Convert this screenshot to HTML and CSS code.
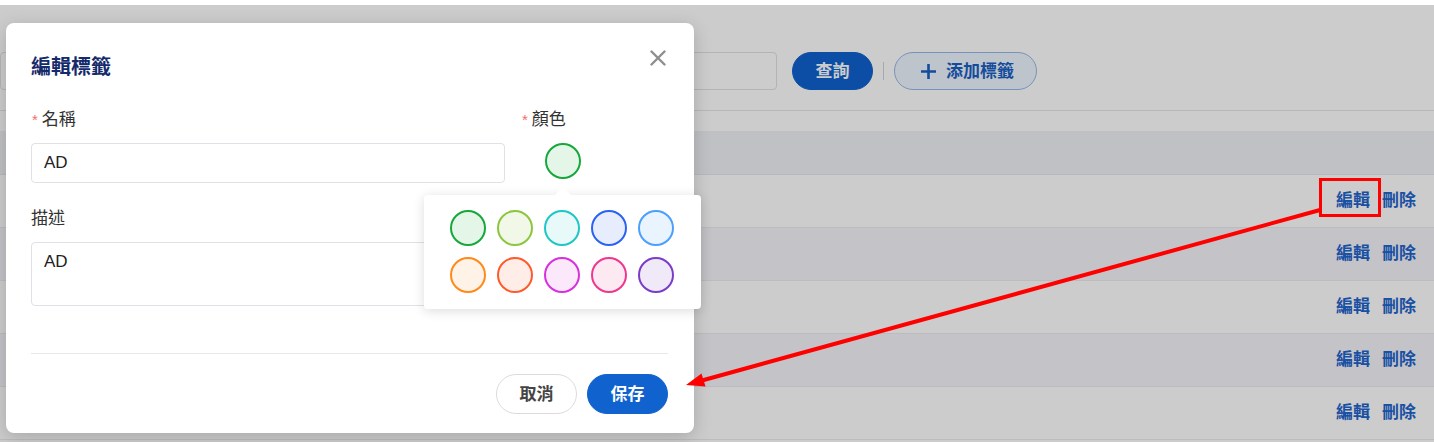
FILE: index.html
```html
<!DOCTYPE html>
<html lang="zh-Hant">
<head>
<meta charset="utf-8">
<title>編輯標籤</title>
<link rel="stylesheet" href="styles.css">
</head>
<body>
<div class="page">
  <div class="filters">
    <div class="toolbar">
      <div class="input input-a"></div>
      <div class="input input-b"></div>
      <button class="btn btn-primary btn-query">查詢</button>
      <span class="vsep"></span>
      <button class="btn btn-outline">
        <svg class="plus" width="17" height="17" viewBox="0 0 17 17"><path d="M8.5 1v15M1 8.5h15" stroke="currentColor" stroke-width="2.6" fill="none"/></svg>
        添加標籤
      </button>
    </div>
  </div>
  <div class="table">
    <div class="thead"></div>
    <div class="row"><div class="actions"><a class="link">編輯</a><a class="link">刪除</a></div></div>
    <div class="row alt"><div class="actions"><a class="link">編輯</a><a class="link">刪除</a></div></div>
    <div class="row"><div class="actions"><a class="link">編輯</a><a class="link">刪除</a></div></div>
    <div class="row alt"><div class="actions"><a class="link">編輯</a><a class="link">刪除</a></div></div>
    <div class="row"><div class="actions"><a class="link">編輯</a><a class="link">刪除</a></div></div>
  </div>
</div>

<div class="mask"></div>

<div class="modal">
  <div class="modal-header">
    <h2 class="modal-title">編輯標籤</h2>
    <button class="close" aria-label="close">
      <svg width="16" height="16" viewBox="0 0 16 16"><path d="M1.5 1.5l13 13M14.5 1.5l-13 13" stroke="currentColor" stroke-width="2.4" fill="none" stroke-linecap="round"/></svg>
    </button>
  </div>
  <div class="modal-body">
    <div class="form-grid">
      <div class="field">
        <label class="label"><span class="req">*</span>名稱</label>
        <div class="text-input">AD</div>
      </div>
      <div class="field">
        <label class="label"><span class="req">*</span>顏色</label>
        <div class="picker">
          <span class="swatch c-green"></span>
          <div class="popover">
            <span class="swatch c-green"></span>
            <span class="swatch c-lime"></span>
            <span class="swatch c-cyan"></span>
            <span class="swatch c-blue"></span>
            <span class="swatch c-sky"></span>
            <span class="swatch c-orange"></span>
            <span class="swatch c-red"></span>
            <span class="swatch c-magenta"></span>
            <span class="swatch c-pink"></span>
            <span class="swatch c-purple"></span>
          </div>
        </div>
      </div>
      <div class="field field-desc">
        <label class="label">描述</label>
        <div class="textarea">AD</div>
      </div>
    </div>
  </div>
  <div class="modal-footer">
    <button class="btn btn-default">取消</button>
    <button class="btn btn-primary btn-save">保存</button>
  </div>
</div>

<svg class="annot" width="1434" height="442" viewBox="0 0 1434 442">
  <rect x="1320.5" y="179.5" width="59" height="36" fill="none" stroke="#ff0000" stroke-width="3"/>
  <line x1="1320" y1="210" x2="702" y2="380.5" stroke="#ff0000" stroke-width="4"/>
  <polygon points="686,385 705.5,386.5 701.5,373.5" fill="#ff0000"/>
</svg>
</body>
</html>
```

FILE: styles.css
```css
* { box-sizing: border-box; }
html, body { margin: 0; height: 442px; overflow: hidden; }
body {
  position: relative;
  background: #fff;
  color: #333;
  font-family: "Liberation Sans", "Noto Sans CJK TC", sans-serif;
  font-size: 16px;
}

/* underlying page */
.page { padding-top: 52px; }
.filters { padding-bottom: 20px; border-bottom: 1px solid #e6e6ea; }
.toolbar { display: flex; align-items: center; height: 38px; }
.input { height: 38px; border: 1px solid #dfe1e7; border-radius: 4px; background: #fff; }
.input-a { width: 441px; margin-right: 16px; }
.input-b { width: 320px; margin-right: 15px; }
.btn {
  display: inline-flex; align-items: center; justify-content: center;
  height: 38px; border-radius: 19px; border: 1px solid transparent;
  font-family: inherit; font-size: 17px; font-weight: 700; padding: 0 22px;
  cursor: pointer; line-height: 1;
}
.btn-primary { background: #1062cf; color: #fff; border-color: #1062cf; }
.btn-query { width: 81px; padding: 0; }
.vsep { width: 1px; height: 18px; background: #d0d4dc; margin: 0 10px; }
.btn-outline {
  background: #eef5ff; border-color: #97b8e8; color: #1a5fc4;
  padding: 0 0 0 25px; gap: 9px; width: 143px; justify-content: flex-start;
}
.plus { display: block; flex: none; }

.table { margin-top: 20px; }
.thead { height: 44px; background: #f1f2f6; border-bottom: 1px solid #e6e7eb; }
.row {
  height: 53px; border-bottom: 1px solid #ececef; background: #fff;
  display: flex; align-items: center; justify-content: flex-end; padding-right: 18px;
}
.row.alt { background: #f5f6fa; }
.actions { display: flex; gap: 12px; }
.link { color: #1f64cc; font-weight: 700; font-size: 17px; line-height: 22px; }

/* overlay mask */
.mask { position: absolute; left: 0; right: 0; top: 5px; bottom: 0; background: rgba(0, 0, 0, 0.2); }

/* modal */
.modal {
  position: absolute; left: 6px; top: 23px; width: 688px; height: 410px;
  background: #fff; border-radius: 8px;
  box-shadow: 0 4px 18px rgba(0, 0, 0, 0.18);
  padding: 0 26px 0 25px;
}
.modal-header { display: flex; justify-content: space-between; align-items: flex-start; padding-top: 27px; }
.modal-title { margin: 3px 0 0; font-size: 20px; line-height: 28px; font-weight: 700; color: #142a6b; }
.close { border: 0; background: none; padding: 0; margin-right: 2px; color: #8e8e8e; width: 16px; height: 16px; display: block; }
.close svg { display: block; }

.modal-body { margin-top: 28px; height: 244px; }
.form-grid { display: grid; grid-template-columns: 474px 1fr; column-gap: 16px; row-gap: 25px; }
.label { display: block; font-size: 17px; line-height: 22px; color: #333; margin-bottom: 12px; }
.req { color: #f56c6c; margin-right: 4px; margin-left: 1px; font-size: 15px; }
.text-input {
  height: 40px; border: 1px solid #dfe1e7; border-radius: 4px;
  padding: 0 12px; display: flex; align-items: center; font-size: 17px; color: #222;
}
.textarea {
  height: 64px; border: 1px solid #dfe1e7; border-radius: 4px;
  padding: 8px 12px; font-size: 17px; line-height: 22px; color: #222;
}

.picker { position: relative; margin-left: 24px; width: 36px; height: 40px; }
.swatch { display: block; width: 36px; height: 36px; border-radius: 50%; border: 2px solid; }
.popover {
  position: absolute; left: -121px; top: 52px; width: 277px; height: 114px;
  background: #fff; border-radius: 4px;
  box-shadow: 0 2px 12px rgba(0, 0, 0, 0.14);
  padding: 15px 27px 16px 26px;
  display: grid; grid-template-columns: repeat(5, 36px); gap: 11px;
  z-index: 2;
}
.popover::before {
  content: ""; position: absolute; left: 131px; top: -8px;
  border-left: 8px solid transparent; border-right: 8px solid transparent; border-bottom: 8px solid #fff;
}

.c-green { border-color: #16a83b; background: #e4f6e8; }
.c-lime { border-color: #8cc63f; background: #f1f8e7; }
.c-cyan { border-color: #1fc6c6; background: #e7f9f9; }
.c-blue { border-color: #2a62f2; background: #e7edfd; }
.c-sky { border-color: #4ba0fb; background: #eaf4ff; }
.c-orange { border-color: #ff8a1a; background: #fff2e6; }
.c-red { border-color: #ff5a2c; background: #ffede7; }
.c-magenta { border-color: #d830dc; background: #fbe9fb; }
.c-pink { border-color: #f0378f; background: #fde9f2; }
.c-purple { border-color: #7c3bc9; background: #f0eaf8; }

.modal-footer {
  border-top: 1px solid #e8e8ec; padding-top: 20px;
  display: flex; justify-content: flex-end; gap: 10px;
}
.modal-footer .btn { width: 81px; height: 40px; border-radius: 20px; padding: 0; }
.btn-default { background: #fff; border-color: #dcdcdc; color: #444; }

/* annotation */
.annot { position: absolute; left: 0; top: 0; pointer-events: none; }
```
